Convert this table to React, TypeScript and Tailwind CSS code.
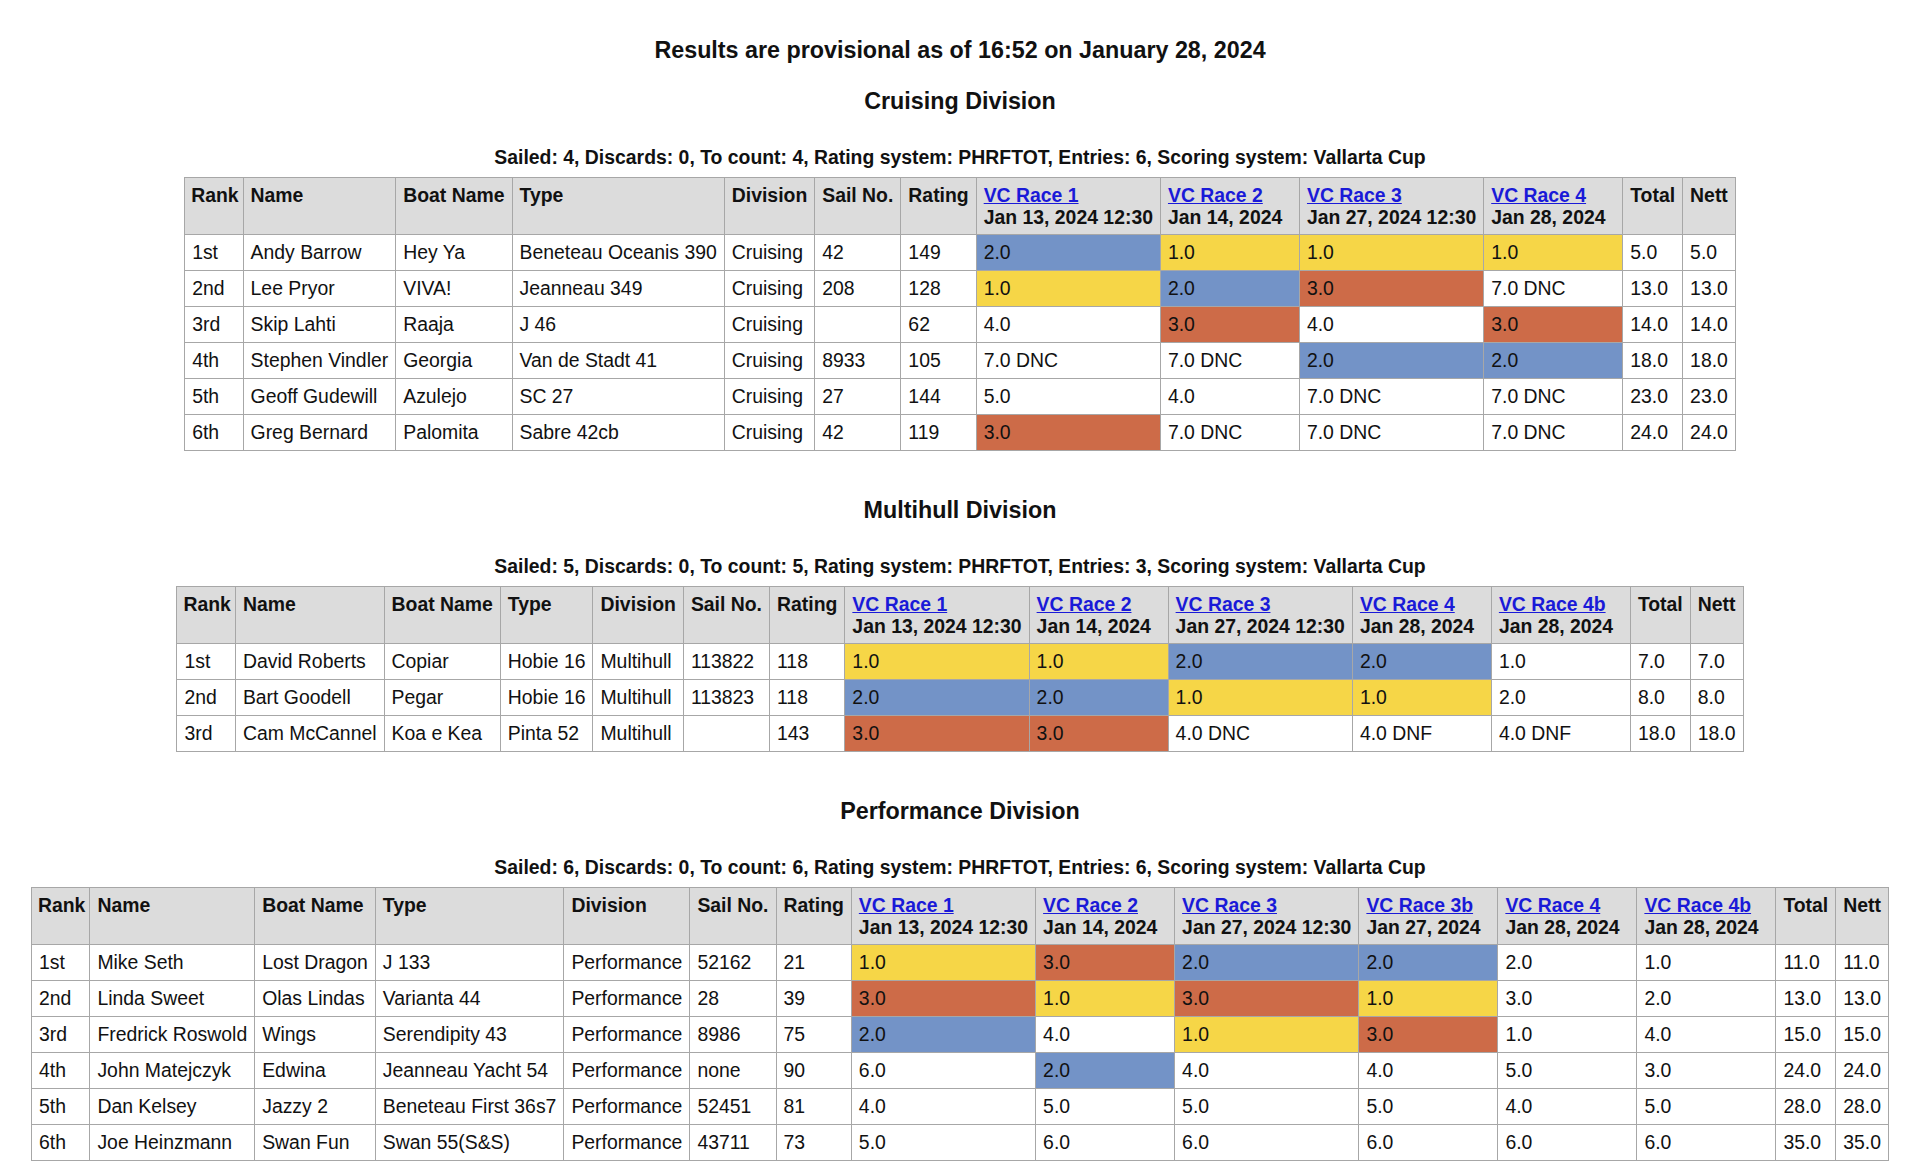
import React from 'react';

type Cell = { v: string; c?: 'y' | 'b' | 'o' };

interface Race {
  name: string;
  date: string;
  wide?: boolean;
}

interface Entry {
  rank: string;
  name: string;
  boat: string;
  type: string;
  division: string;
  sail: string;
  rating: string;
  results: Cell[];
  total: string;
  nett: string;
}

interface Section {
  title: string;
  summary: string;
  races: Race[];
  entries: Entry[];
}

const y = (v: string): Cell => ({ v, c: 'y' });
const b = (v: string): Cell => ({ v, c: 'b' });
const o = (v: string): Cell => ({ v, c: 'o' });
const p = (v: string): Cell => ({ v });

const colour = {
  y: 'bg-[#f6d647]',
  b: 'bg-[#7393c7]',
  o: 'bg-[#cd6b48]',
};

const sections: Section[] = [
  {
    title: 'Cruising Division',
    summary:
      'Sailed: 4, Discards: 0, To count: 4, Rating system: PHRFTOT, Entries: 6, Scoring system: Vallarta Cup',
    races: [
      { name: 'VC Race 1', date: 'Jan 13, 2024 12:30' },
      { name: 'VC Race 2', date: 'Jan 14, 2024', wide: true },
      { name: 'VC Race 3', date: 'Jan 27, 2024 12:30' },
      { name: 'VC Race 4', date: 'Jan 28, 2024', wide: true },
    ],
    entries: [
      { rank: '1st', name: 'Andy Barrow', boat: 'Hey Ya', type: 'Beneteau Oceanis 390', division: 'Cruising', sail: '42', rating: '149', results: [b('2.0'), y('1.0'), y('1.0'), y('1.0')], total: '5.0', nett: '5.0' },
      { rank: '2nd', name: 'Lee Pryor', boat: 'VIVA!', type: 'Jeanneau 349', division: 'Cruising', sail: '208', rating: '128', results: [y('1.0'), b('2.0'), o('3.0'), p('7.0 DNC')], total: '13.0', nett: '13.0' },
      { rank: '3rd', name: 'Skip Lahti', boat: 'Raaja', type: 'J 46', division: 'Cruising', sail: '', rating: '62', results: [p('4.0'), o('3.0'), p('4.0'), o('3.0')], total: '14.0', nett: '14.0' },
      { rank: '4th', name: 'Stephen Vindler', boat: 'Georgia', type: 'Van de Stadt 41', division: 'Cruising', sail: '8933', rating: '105', results: [p('7.0 DNC'), p('7.0 DNC'), b('2.0'), b('2.0')], total: '18.0', nett: '18.0' },
      { rank: '5th', name: 'Geoff Gudewill', boat: 'Azulejo', type: 'SC 27', division: 'Cruising', sail: '27', rating: '144', results: [p('5.0'), p('4.0'), p('7.0 DNC'), p('7.0 DNC')], total: '23.0', nett: '23.0' },
      { rank: '6th', name: 'Greg Bernard', boat: 'Palomita', type: 'Sabre 42cb', division: 'Cruising', sail: '42', rating: '119', results: [o('3.0'), p('7.0 DNC'), p('7.0 DNC'), p('7.0 DNC')], total: '24.0', nett: '24.0' },
    ],
  },
  {
    title: 'Multihull Division',
    summary:
      'Sailed: 5, Discards: 0, To count: 5, Rating system: PHRFTOT, Entries: 3, Scoring system: Vallarta Cup',
    races: [
      { name: 'VC Race 1', date: 'Jan 13, 2024 12:30' },
      { name: 'VC Race 2', date: 'Jan 14, 2024', wide: true },
      { name: 'VC Race 3', date: 'Jan 27, 2024 12:30' },
      { name: 'VC Race 4', date: 'Jan 28, 2024', wide: true },
      { name: 'VC Race 4b', date: 'Jan 28, 2024', wide: true },
    ],
    entries: [
      { rank: '1st', name: 'David Roberts', boat: 'Copiar', type: 'Hobie 16', division: 'Multihull', sail: '113822', rating: '118', results: [y('1.0'), y('1.0'), b('2.0'), b('2.0'), p('1.0')], total: '7.0', nett: '7.0' },
      { rank: '2nd', name: 'Bart Goodell', boat: 'Pegar', type: 'Hobie 16', division: 'Multihull', sail: '113823', rating: '118', results: [b('2.0'), b('2.0'), y('1.0'), y('1.0'), p('2.0')], total: '8.0', nett: '8.0' },
      { rank: '3rd', name: 'Cam McCannel', boat: 'Koa e Kea', type: 'Pinta 52', division: 'Multihull', sail: '', rating: '143', results: [o('3.0'), o('3.0'), p('4.0 DNC'), p('4.0 DNF'), p('4.0 DNF')], total: '18.0', nett: '18.0' },
    ],
  },
  {
    title: 'Performance Division',
    summary:
      'Sailed: 6, Discards: 0, To count: 6, Rating system: PHRFTOT, Entries: 6, Scoring system: Vallarta Cup',
    races: [
      { name: 'VC Race 1', date: 'Jan 13, 2024 12:30' },
      { name: 'VC Race 2', date: 'Jan 14, 2024', wide: true },
      { name: 'VC Race 3', date: 'Jan 27, 2024 12:30' },
      { name: 'VC Race 3b', date: 'Jan 27, 2024', wide: true },
      { name: 'VC Race 4', date: 'Jan 28, 2024', wide: true },
      { name: 'VC Race 4b', date: 'Jan 28, 2024', wide: true },
    ],
    entries: [
      { rank: '1st', name: 'Mike Seth', boat: 'Lost Dragon', type: 'J 133', division: 'Performance', sail: '52162', rating: '21', results: [y('1.0'), o('3.0'), b('2.0'), b('2.0'), p('2.0'), p('1.0')], total: '11.0', nett: '11.0' },
      { rank: '2nd', name: 'Linda Sweet', boat: 'Olas Lindas', type: 'Varianta 44', division: 'Performance', sail: '28', rating: '39', results: [o('3.0'), y('1.0'), o('3.0'), y('1.0'), p('3.0'), p('2.0')], total: '13.0', nett: '13.0' },
      { rank: '3rd', name: 'Fredrick Roswold', boat: 'Wings', type: 'Serendipity 43', division: 'Performance', sail: '8986', rating: '75', results: [b('2.0'), p('4.0'), y('1.0'), o('3.0'), p('1.0'), p('4.0')], total: '15.0', nett: '15.0' },
      { rank: '4th', name: 'John Matejczyk', boat: 'Edwina', type: 'Jeanneau Yacht 54', division: 'Performance', sail: 'none', rating: '90', results: [p('6.0'), b('2.0'), p('4.0'), p('4.0'), p('5.0'), p('3.0')], total: '24.0', nett: '24.0' },
      { rank: '5th', name: 'Dan Kelsey', boat: 'Jazzy 2', type: 'Beneteau First 36s7', division: 'Performance', sail: '52451', rating: '81', results: [p('4.0'), p('5.0'), p('5.0'), p('5.0'), p('4.0'), p('5.0')], total: '28.0', nett: '28.0' },
      { rank: '6th', name: 'Joe Heinzmann', boat: 'Swan Fun', type: 'Swan 55(S&S)', division: 'Performance', sail: '43711', rating: '73', results: [p('5.0'), p('6.0'), p('6.0'), p('6.0'), p('6.0'), p('6.0')], total: '35.0', nett: '35.0' },
    ],
  },
];

// shared cell look: collapsed grey borders, left aligned, top aligned
const cellBase = 'border border-[#a7a7a7] text-left align-top whitespace-nowrap';
const headCell = `${cellBase} px-[7px] py-[6px] leading-[22px] font-bold`;
const bodyCell = `${cellBase} px-[7px] py-[6px] leading-[23px]`;

const ResultsTable: React.FC<{ section: Section }> = ({ section }) => {
  const fixed = ['Name', 'Boat Name', 'Type', 'Division', 'Sail No.', 'Rating'];
  return (
    <table className="mx-auto border-collapse border border-[#a7a7a7]">
      <thead>
        <tr className="bg-[#dcdcdc]">
          <th className={`${cellBase} pl-[6px] pr-[4px] py-[6px] leading-[22px] font-bold`}>Rank</th>
          {fixed.map(h => (
            <th key={h} className={headCell}>{h}</th>
          ))}
          {section.races.map(r => (
            <th key={r.name} className={`${headCell} ${r.wide ? 'w-[139px]' : ''}`}>
              <a href="#" className="text-[#1a1ad8] underline">{r.name}</a>
              <br />
              {r.date}
            </th>
          ))}
          <th className={headCell}>Total</th>
          <th className={headCell}>Nett</th>
        </tr>
      </thead>
      <tbody>
        {section.entries.map(e => (
          <tr key={e.rank} className="bg-white">
            <td className={bodyCell}>{e.rank}</td>
            <td className={bodyCell}>{e.name}</td>
            <td className={bodyCell}>{e.boat}</td>
            <td className={bodyCell}>{e.type}</td>
            <td className={bodyCell}>{e.division}</td>
            <td className={bodyCell}>{e.sail}</td>
            <td className={bodyCell}>{e.rating}</td>
            {e.results.map((r, i) => (
              <td key={i} className={`${bodyCell} ${r.c ? colour[r.c] : ''}`}>{r.v}</td>
            ))}
            <td className={bodyCell}>{e.total}</td>
            <td className={bodyCell}>{e.nett}</td>
          </tr>
        ))}
      </tbody>
    </table>
  );
};

const App: React.FC = () => {
  return (
    <div className="min-h-screen bg-white text-[#111] text-[19.4px] font-['Liberation_Sans',Arial,sans-serif] pt-[37px] pb-[18px]">
      <h2 className="text-center font-bold text-[23.3px] leading-[27px]">
        Results are provisional as of 16:52 on January 28, 2024
      </h2>
      {sections.map((s, i) => (
        <div key={s.title} className={i === 0 ? 'mt-[24px]' : 'mt-[46px]'}>
          <h3 className="text-center font-bold text-[23.3px] leading-[27px]">{s.title}</h3>
          <div className="mt-[31px] mb-[9px] text-center font-bold leading-[22px]">{s.summary}</div>
          <ResultsTable section={s} />
        </div>
      ))}
    </div>
  );
};

export default App;
